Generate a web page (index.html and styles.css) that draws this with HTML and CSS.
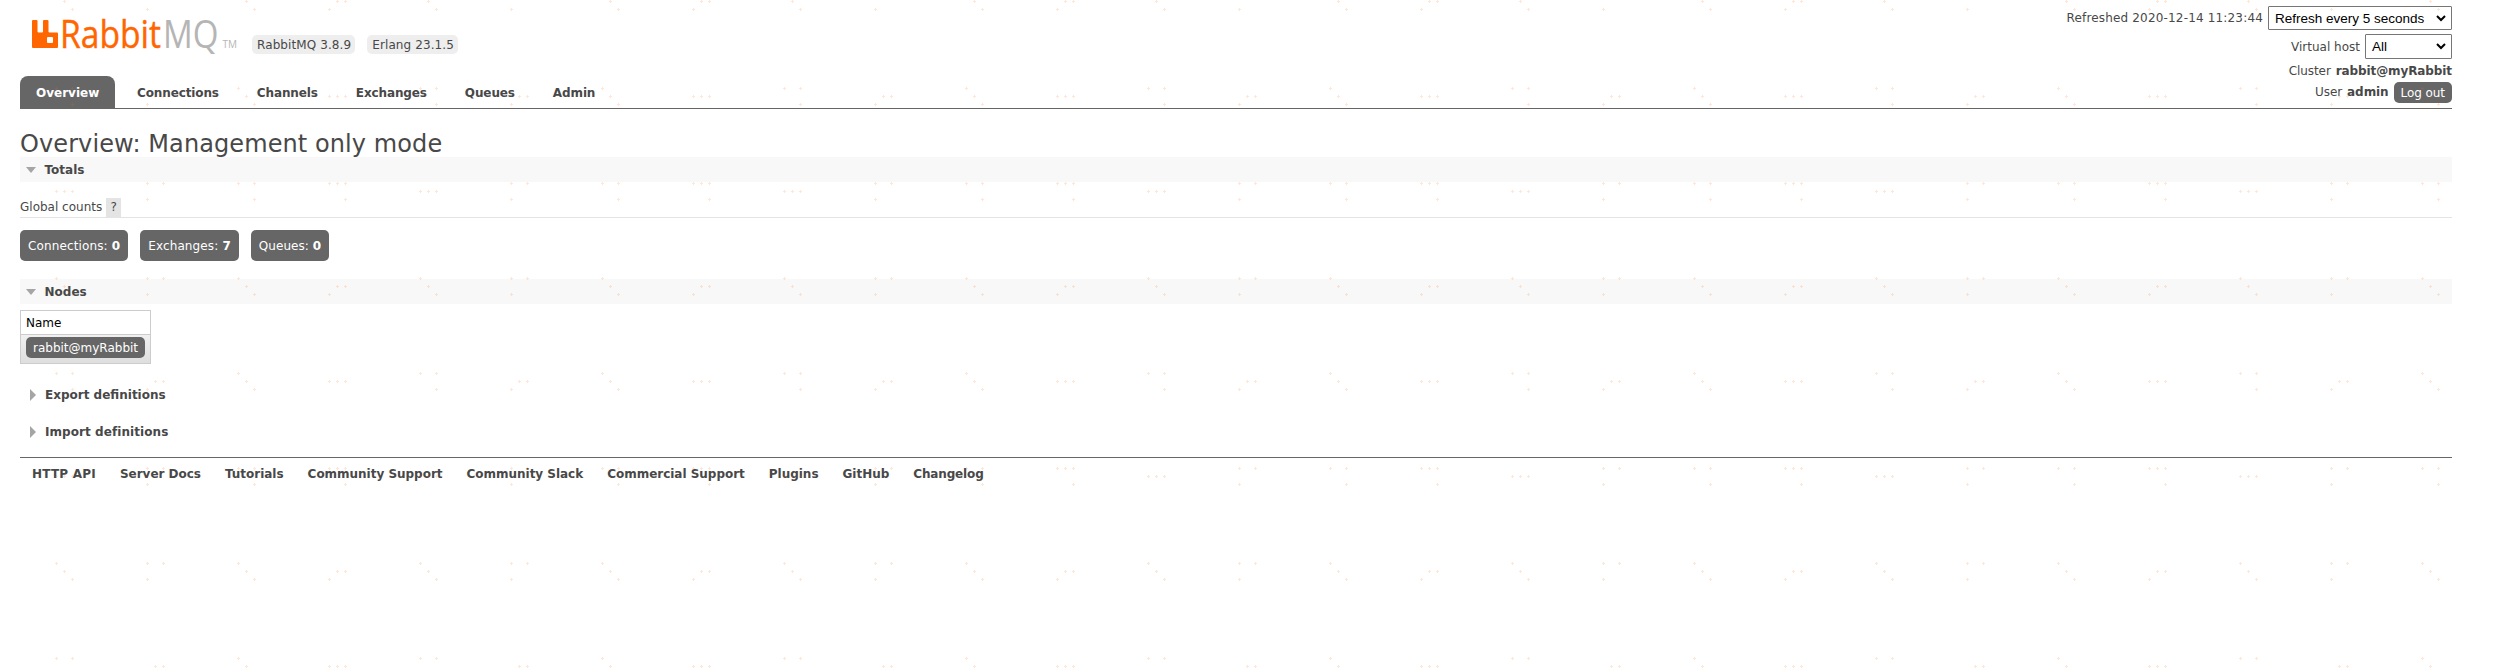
FILE: index.html
```html
<!DOCTYPE html>
<html lang="en">
<head>
<meta charset="utf-8">
<title>RabbitMQ Management</title>
<link rel="stylesheet" href="styles.css">
</head>
<body>
<header class="header">
  <div class="masthead">
    <div class="brand">
      <svg class="logo" width="206" height="32" viewBox="0 0 206 32">
        <path fill="#f60" d="M1 0h3.500q1 0 1 1v10.500q0 1 1 1h3.500q1 0 1-1V1q0-1 1-1h3.500q1 0 1 1v10.500q0 1 1 1H25q1 0 1 1V27q0 1-1 1H1q-1 0-1-1V1q0-1 1-1zM16 17q-1 0-1 1v4q0 1 1 1h4q1 0 1-1v-4q0-1-1-1z"/>
        <text class="logo-rabbit" x="28" y="28" textLength="101" lengthAdjust="spacingAndGlyphs">Rabbit</text>
        <text class="logo-mq" x="131" y="28" textLength="55.500" lengthAdjust="spacingAndGlyphs">MQ</text>
        <text class="logo-tm" x="190.500" y="28" textLength="14.500" lengthAdjust="spacingAndGlyphs">TM</text>
      </svg>
      <span class="version">RabbitMQ 3.8.9</span>
      <span class="version">Erlang 23.1.5</span>
    </div>
    <nav class="tabs">
      <a class="tab active">Overview</a>
      <a class="tab">Connections</a>
      <a class="tab">Channels</a>
      <a class="tab">Exchanges</a>
      <a class="tab">Queues</a>
      <a class="tab">Admin</a>
    </nav>
  </div>
  <div class="status">
    <div class="status-row refresh"><span class="stamp">Refreshed 2020-12-14 11:23:44</span>
      <span class="select every">Refresh every 5 seconds<svg width="10" height="7" viewBox="0 0 10 7"><path d="M1 1l4 4 4-4" fill="none" stroke="#000" stroke-width="2"/></svg></span></div>
    <div class="status-row vhost"><span>Virtual host</span>
      <span class="select all">All<svg width="10" height="7" viewBox="0 0 10 7"><path d="M1 1l4 4 4-4" fill="none" stroke="#000" stroke-width="2"/></svg></span></div>
    <div class="status-row cluster"><span>Cluster</span><b>rabbit@myRabbit</b></div>
    <div class="status-row user"><span>User</span><b>admin</b><span class="button">Log out</span></div>
  </div>
</header>
<main class="main">
  <h1>Overview: Management only mode</h1>
  <h2 class="section open"><i class="arrow down"></i>Totals</h2>
  <div class="counts-title"><span>Global counts</span><span class="help">?</span></div>
  <div class="counts">
    <span class="count">Connections: <b>0</b></span>
    <span class="count">Exchanges: <b>7</b></span>
    <span class="count queues">Queues: <b>0</b></span>
  </div>
  <h2 class="section open"><i class="arrow down"></i>Nodes</h2>
  <div class="nodes">
    <div class="nodes-head">Name</div>
    <div class="nodes-row"><span class="button node">rabbit@myRabbit</span></div>
  </div>
  <h2 class="section closed"><i class="arrow right"></i>Export definitions</h2>
  <h2 class="section closed last"><i class="arrow right"></i>Import definitions</h2>
</main>
<footer class="footer">
  <a class="api">HTTP API</a><a>Server Docs</a><a>Tutorials</a><a>Community Support</a><a>Community Slack</a><a>Commercial Support</a><a>Plugins</a><a>GitHub</a><a class="log">Changelog</a>
</footer>
<svg class="speckle" width="2494" height="671">
  <defs>
    <path id="s" d="M-1 0h3v1h-3zM0-1h1v3h-1z"/>
    <pattern id="dots" width="364" height="285" y="-16" patternUnits="userSpaceOnUse">
      <g fill="#f60" fill-opacity=".16">
        <use href="#s" x="56" y="9"/><use href="#s" x="147" y="9"/><use href="#s" x="163" y="9"/><use href="#s" x="238" y="9"/>
        <use href="#s" x="64" y="17"/><use href="#s" x="246" y="17"/><use href="#s" x="337" y="17"/><use href="#s" x="345" y="17"/>
        <use href="#s" x="72" y="25"/><use href="#s" x="147" y="25"/><use href="#s" x="254" y="25"/><use href="#s" x="329" y="25"/>
        <use href="#s" x="56" y="104"/><use href="#s" x="72" y="104"/><use href="#s" x="238" y="104"/>
        <use href="#s" x="155" y="112"/><use href="#s" x="163" y="112"/><use href="#s" x="246" y="112"/><use href="#s" x="329" y="112"/><use href="#s" x="337" y="112"/><use href="#s" x="345" y="112"/>
        <use href="#s" x="72" y="120"/><use href="#s" x="147" y="120"/><use href="#s" x="254" y="120"/>
        <use href="#s" x="147" y="199"/><use href="#s" x="163" y="199"/><use href="#s" x="238" y="199"/><use href="#s" x="254" y="199"/><use href="#s" x="329" y="199"/><use href="#s" x="337" y="199"/><use href="#s" x="345" y="199"/>
        <use href="#s" x="56" y="207"/><use href="#s" x="64" y="207"/><use href="#s" x="72" y="207"/>
        <use href="#s" x="147" y="215"/><use href="#s" x="254" y="215"/><use href="#s" x="345" y="215"/>
      </g>
    </pattern>
  </defs>
  <rect width="2494" height="671" fill="url(#dots)"/>
</svg>
</body>
</html>
```
FILE: styles.css
```css
* { box-sizing: border-box; }
body { position: relative; margin: 0; padding: 0 42px 0 20px; height: 671px; overflow: hidden; background: #fff; color: #484848; font: 12px/16px Verdana, "DejaVu Sans", sans-serif; }
.speckle { position: absolute; top: 0; left: 0; pointer-events: none; }
.header { display: flex; justify-content: space-between; height: 109px; border-bottom: 1px solid #666; }
.masthead { display: flex; flex-direction: column; justify-content: space-between; }
.brand { display: flex; padding: 20px 0 0 12px; }
.logo { margin-right: 14px; overflow: visible; }
.logo text { font-family: "Open Sans", sans-serif; }
.logo-rabbit { font-size: 38.5px; fill: #f60; stroke: #f60; stroke-width: .4px; }
.logo-mq { font-size: 38.5px; fill: #b5b5b5; }
.logo .logo-tm { font-size: 10px; fill: #b5b5b5; }
.version { height: 19px; margin: 15px 12px 0 0; padding: 2px 4px 0 5px; line-height: 17px; letter-spacing: .1px; border-radius: 5px; background: #eee; }
.tabs { display: flex; gap: 6px; }
.tab { height: 32px; padding: 0 16px; line-height: 34px; font-weight: bold; letter-spacing: -.12px; border-radius: 8px 8px 0 0; }
.tab.active { width: 95px; background: #666; color: #fff; letter-spacing: 0; }
.status { display: flex; flex-direction: column; align-items: flex-end; padding-top: 6px; }
.status-row { display: flex; align-items: center; gap: 5px; line-height: 18px; }
.stamp { letter-spacing: .17px; }
.refresh { height: 24px; }
.vhost { height: 25px; margin-top: 4px; }
.cluster { height: 22px; padding-top: 1px; letter-spacing: -.1px; }
.user { height: 22px; letter-spacing: -.07px; }
.select { display: flex; align-items: center; justify-content: space-between; border: 1px solid #767676; border-radius: 1px; background: #fff; padding: 0 5px 0 6px; color: #000; font: 13.5px "Liberation Sans", Arial, sans-serif; letter-spacing: 0; }
.every { width: 184px; height: 24px; }
.all { width: 87px; height: 25px; }
.button { height: 21px; padding: 0 7px; line-height: 22px; border-radius: 5px; background: #666; color: #fff; }
h1 { margin: 20px 0 0; height: 28px; line-height: 30px; font-size: 24px; font-weight: normal; letter-spacing: .09px; }
.section { display: flex; align-items: center; height: 25px; margin: 0; font-size: 12px; }
.open { background: #f8f8f8; }
.arrow { width: 0; height: 0; }
.down { margin: 0 8.500px 0 6px; border: 6px solid transparent; border-width: 6px 5.500px 0; border-top-color: #a5a5a5; }
.right { margin: 0 9px 0 10px; border: 6px solid transparent; border-width: 6px 0 6px 6px; border-left-color: #a5a5a5; }
.counts-title { display: flex; align-items: flex-end; gap: 4px; height: 36px; border-bottom: 1px solid #e4e4e4; line-height: 19px; }
.help { width: 15px; height: 19px; text-align: center; background: #e4e4e4; }
.counts { display: flex; gap: 12px; padding: 12px 0 18px; }
.count { height: 31px; padding: 0 8px; line-height: 32px; letter-spacing: .13px; border-radius: 5px; background: #666; color: #fff; }
.queues { letter-spacing: .05px; }
.nodes { width: 131px; height: 54px; margin: 6px 0 18px; border: 1px solid #ccc; }
.nodes-head { height: 24px; padding-left: 5px; line-height: 25px; border-bottom: 1px solid #ccc; color: #000; }
.nodes-row { display: flex; height: 28px; padding: 2px 5px; background: linear-gradient(#f0f0f0, #dedede); }
.closed { margin-bottom: 12px; }
.last { margin-bottom: 13px; letter-spacing: .07px; }
.footer { display: flex; gap: 24px; padding: 8px 12px; border-top: 1px solid #666; font-weight: bold; letter-spacing: -.02px; }
.api { letter-spacing: .22px; }
.log { letter-spacing: -.15px; }
```
